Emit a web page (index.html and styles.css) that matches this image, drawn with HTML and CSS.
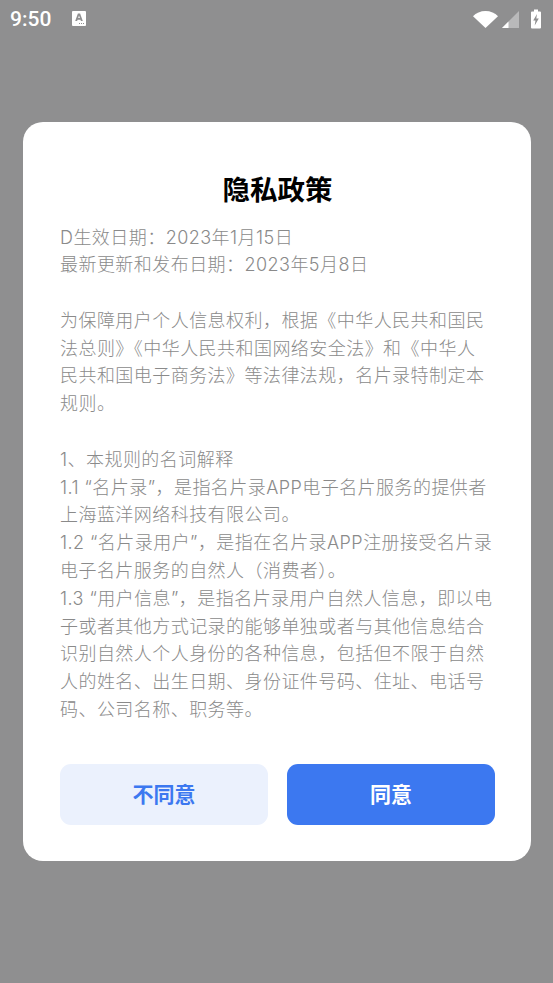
FILE: index.html
```html
<!DOCTYPE html>
<html lang="zh-CN">
<head>
<meta charset="utf-8">
<title>隐私政策</title>
<link rel="stylesheet" href="styles.css">
</head>
<body>
<div class="screen">
  <header class="status">
    <span class="time">9:50</span>
    <svg class="notif" width="14" height="15" viewBox="0 0 14 15"><path fill="#fff" d="M0 1a1 1 0 0 1 1-1h12a1 1 0 0 1 1 1v13a1 1 0 0 1-1 1H1a1 1 0 0 1-1-1z"/><path fill="#8f8f90" d="M5.900 2.500h2.200l2.700 7.500H8.900l-.4-1.300h-2.900L5.100 10H3.200zM6.200 7.100h1.700L7 4.600z"/><path fill="#8f8f90" d="M7 12h1v1H7zM9 12h1v1H9zM11 12h1v1h-1z"/></svg>
    <span class="status-right">
      <svg width="25" height="17" viewBox="0 0 25 17"><path fill="#fff" d="M0 5.200C3 2 7.500 0 12.500 0S22 2 25 5.200L12.500 17z"/></svg>
      <svg class="signal" width="17" height="17" viewBox="0 0 17 17"><path fill="#b9b9ba" d="M17 0v17H0z"/><path fill="#fff" d="M6.500 10.500V17H0z"/></svg>
      <svg class="battery" width="10" height="20" viewBox="0 0 10 19"><path fill="#fff" d="M3 0h4v2h2a1 1 0 0 1 1 1v15a1 1 0 0 1-1 1H1a1 1 0 0 1-1-1V3a1 1 0 0 1 1-1h2z"/><path fill="#8f8f90" d="M6 4.500 2.200 11h2.300L3.700 16 7.800 9H5.300z"/></svg>
    </span>
  </header>
  <main class="dialog">
    <h1 class="title">隐私政策</h1>
    <div class="body">
      <p>D生效日期：2023年1月15日<br>最新更新和发布日期：2023年5月8日</p>
      <p>为保障用户个人信息权利，根据《中华人民共和国民<br>法总则》《中华人民共和国网络安全法》和《中华人<br>民共和国电子商务法》等法律法规，名片录特制定本<br>规则。</p>
      <p>1、本规则的名词解释<br>1.1 “名片录”，是指名片录APP电子名片服务的提供者上海蓝洋网络科技有限公司。<br>1.2 “名片录用户”，是指在名片录APP注册接受名片录电子名片服务的自然人（消费者）。<br>1.3 “用户信息”，是指名片录用户自然人信息，即以电子或者其他方式记录的能够单独或者与其他信息结合识别自然人个人身份的各种信息，包括但不限于自然人的姓名、出生日期、身份证件号码、住址、电话号码、公司名称、职务等。</p>
    </div>
    <div class="actions">
      <button class="btn btn-light">不同意</button>
      <button class="btn btn-primary">同意</button>
    </div>
  </main>
</div>
</body>
</html>
```
FILE: styles.css
```css
* { box-sizing: border-box; margin: 0; padding: 0; }
html, body { width: 553px; height: 983px; overflow: hidden; }
body { background: #8f8f90; font-family: "Inter", "Noto Sans CJK SC", sans-serif; }
.screen { width: 553px; height: 983px; display: flex; flex-direction: column; }
.status { height: 38px; display: flex; align-items: center; padding: 0 12px 0 10px; color: #fff; }
.time { font-family: "Roboto", sans-serif; font-size: 21px; font-weight: 500; width: 62px; }
.notif { margin-top: -1px; }
.status-right { margin-left: auto; display: flex; align-items: center; gap: 4px; }
.status-right svg { display: block; }
.battery { margin-left: 8px; }
.dialog { margin: 84px 22px 0 23px; height: 739px; background: #fff; border-radius: 20px; padding: 48px 36px 0 37px; display: flex; flex-direction: column; }
.title { font-size: 27.500px; line-height: 36px; font-weight: 700; color: #000; text-align: center; font-family: "Noto Sans CJK SC", sans-serif; }
.body { margin-top: 17.500px; font-size: 18px; line-height: 27.800px; letter-spacing: 0.45px; font-weight: 300; color: #8a8a8a; height: 540.500px; }
.body p + p { margin-top: 27.800px; }
.actions { display: flex; gap: 19px; }
.btn { flex: 1; height: 61px; border: 0; border-radius: 11px; padding-bottom: 4px; font-family: "Noto Sans CJK SC", sans-serif; font-size: 21px; font-weight: 700; }
.btn-light { background: #ebf1fd; color: #3c78f0; }
.btn-primary { background: #3c78f0; color: #fff; }
```
